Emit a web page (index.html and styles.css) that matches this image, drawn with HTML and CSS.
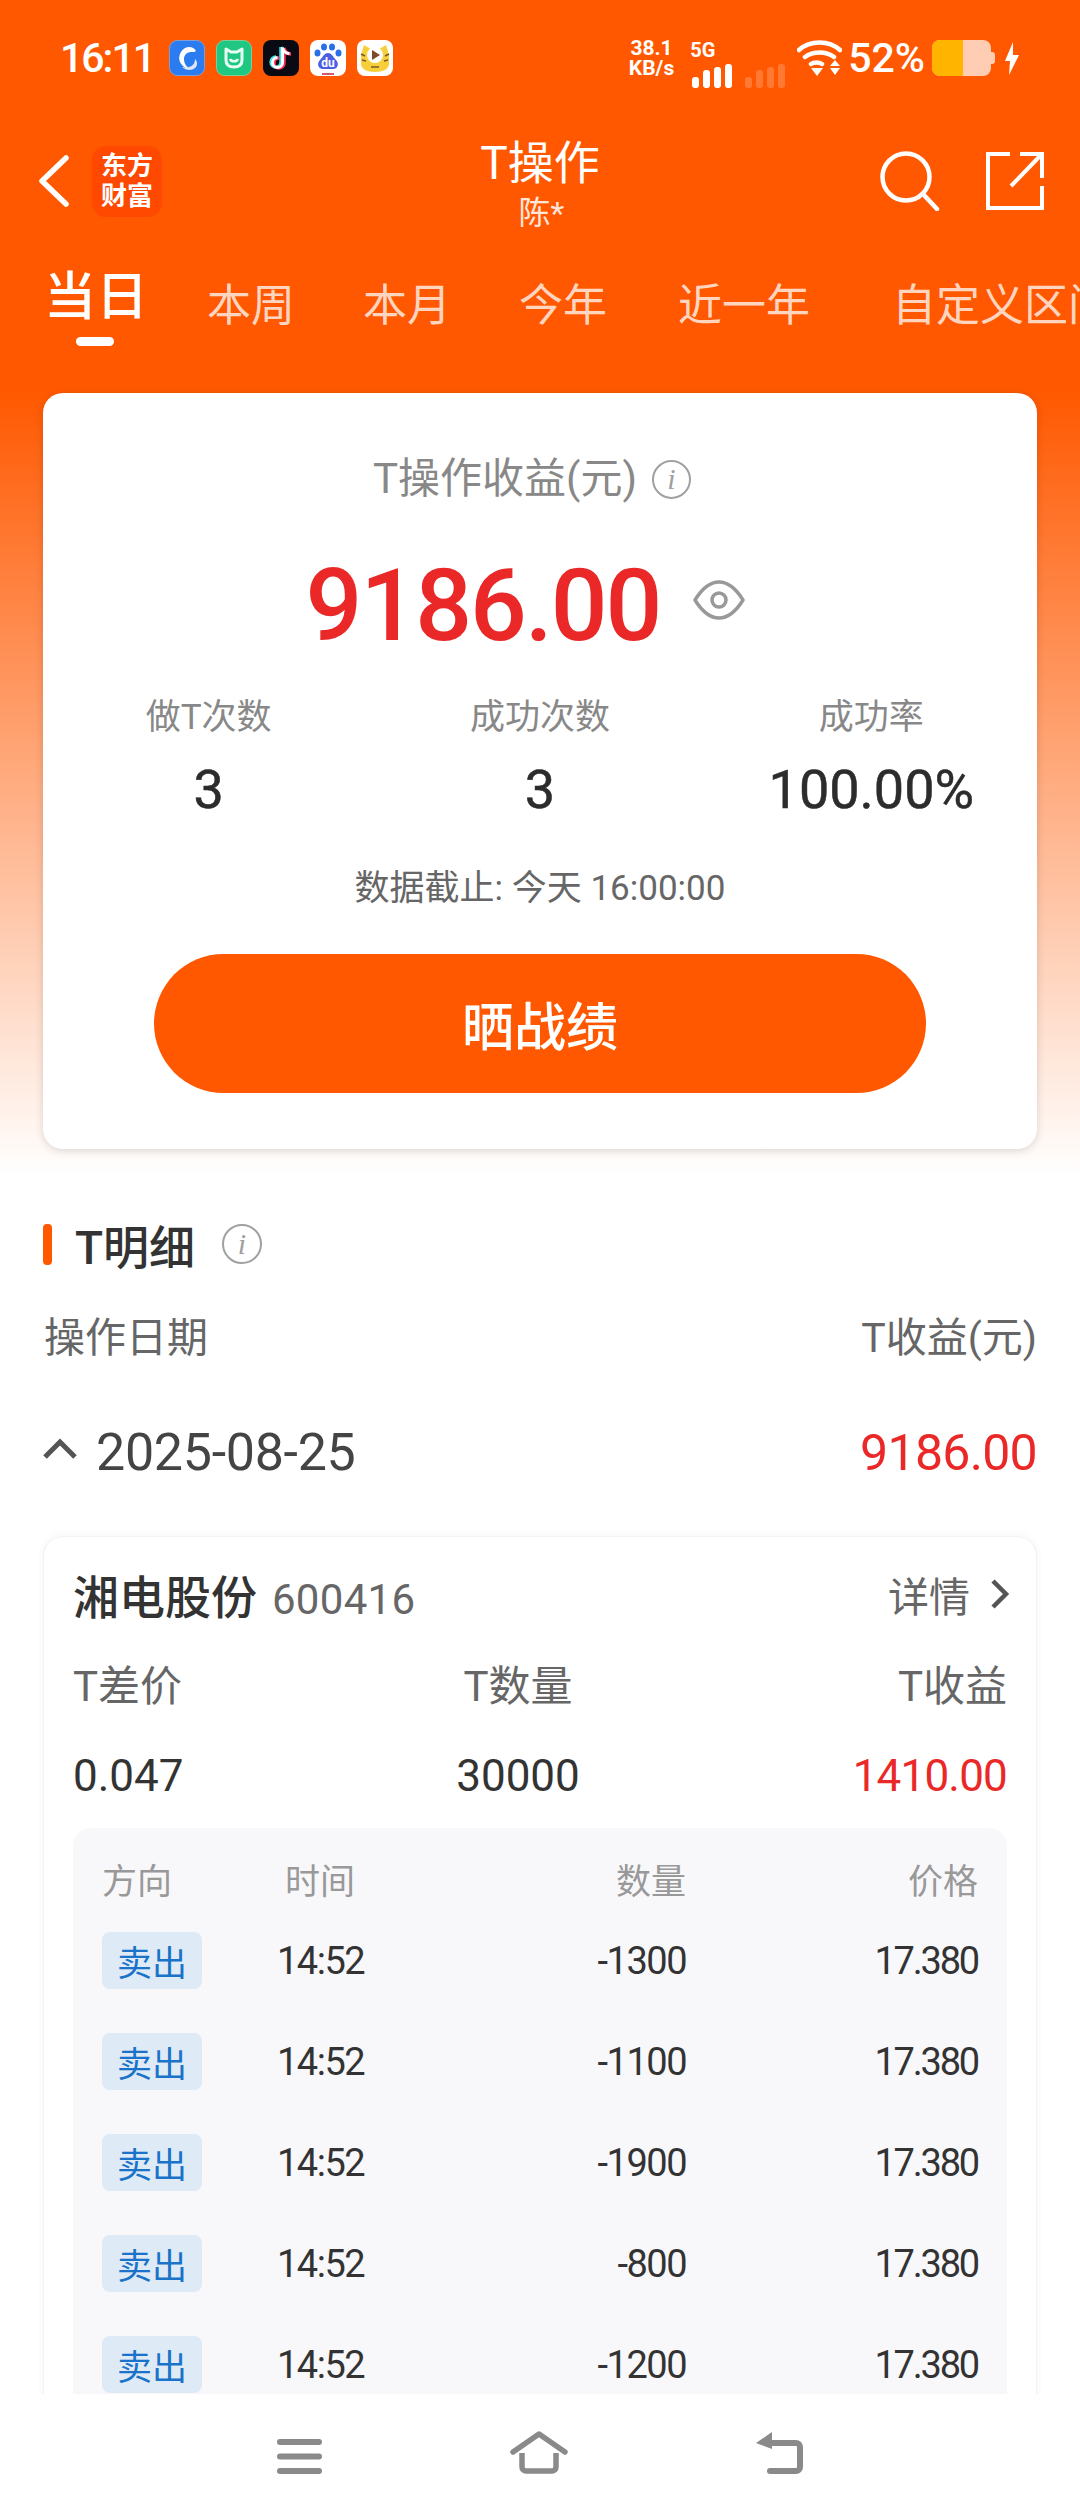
FILE: index.html
```html
<!DOCTYPE html>
<html lang="zh-CN">

<head>
  <meta charset="UTF-8" />
  <meta name="viewport" content="width=device-width, initial-scale=1.0" />
  <title>T操作</title>
  <link rel="stylesheet" href="styles.css">
</head>

<body>
  <div class="page">
    <div class="main">
      <!-- status bar -->
      <div class="status-bar">
        <div class="status-left">
          <span class="clock">16:11</span>
          <div class="app-icons">
            <svg class="app-icon" viewBox="0 0 36 36"><rect x=".5" y=".5" width="35" height="35" rx="8" fill="#2a7cf0" stroke="#7f9fd8"/><path d="M27 11c-2-4-7-5-11-3-5 3-7 9-5 14 2 4 6 7 10 7-3-2-6-5-6-10 0-4 3-7 7-7 2 0 4 0 5-1z" fill="#fff"/><path d="M13 27c4 4 11 4 14 0 2-3 1-6-1-8 0 4-2 7-6 8-2 .5-5 .5-7 0z" fill="#dfe6f2"/></svg>
            <svg class="app-icon" viewBox="0 0 36 36"><rect x=".5" y=".5" width="35" height="35" rx="8" fill="#1fc782" stroke="#7fcf9a"/><path d="M10 9l5 3h6l5-3v11c0 5-3 7-8 7s-8-2-8-7z" fill="none" stroke="#e8fff4" stroke-width="3" stroke-linejoin="round"/><path d="M14 19c1 3 7 3 8 0" fill="none" stroke="#e8fff4" stroke-width="2.5"/></svg>
            <svg class="app-icon" viewBox="0 0 36 36"><rect width="36" height="36" rx="8" fill="#0a0a14"/><path d="M18 7v15a5 5 0 1 1-5-5M18 7c1 4 3 6 7 6" fill="none" stroke="#3fe0e0" stroke-width="3.5"/><path d="M21 8v15a5 5 0 1 1-5-5M21 8c1 4 3 6 7 6" fill="none" stroke="#ff2d55" stroke-width="3.5"/><path d="M19.500 7.500v15a5 5 0 1 1-5-5M19.500 7.500c1 4 3 6 7 6" fill="none" stroke="#fff" stroke-width="3"/></svg>
            <svg class="app-icon" viewBox="0 0 36 36"><rect width="36" height="36" rx="8" fill="#fff"/><ellipse cx="7.500" cy="13" rx="3" ry="3.500" fill="#2a6fe8"/><ellipse cx="14" cy="7" rx="3" ry="3.500" fill="#2a6fe8"/><ellipse cx="22" cy="7" rx="3" ry="3.500" fill="#2a6fe8"/><ellipse cx="28.500" cy="13" rx="3" ry="3.500" fill="#2a6fe8"/><path d="M18 13c-4 0-5 4-8 7-4 4-1 10 4 9h8c5 1 8-5 4-9-3-3-4-7-8-7z" fill="#4b5fe0"/><text class="baidu-text" x="18" y="27" text-anchor="middle">du</text><rect x="12" y="33" width="12" height="2" fill="#d05a6a"/></svg>
            <svg class="app-icon" viewBox="0 0 36 36"><rect width="36" height="36" rx="8" fill="#fff"/><path d="M4 15l3-10 7 4h8l7-4 3 10v9c0 5-6 8-14 8S4 29 4 24z" fill="#f7cf3a"/><path d="M4 14l4 2M5 20l4 1M32 14l-4 2M31 20l-4 1" stroke="#7a5a2a" stroke-width="1.500"/><circle cx="18" cy="15" r="8" fill="#fff"/><path d="M15 10l8 5-8 5z" fill="#7a4a2a"/><path d="M14 27h8" stroke="#7a5a2a" stroke-width="1.500"/></svg>
          </div>
        </div>
        <div class="status-right">
          <div class="net-speed"><span>38.1</span><span>KB/s</span></div>
          <div class="signal">
            <span class="signal-label">5G</span>
            <svg width="40" height="24" viewBox="0 0 40 24"><rect x="0" y="13" width="7" height="11" rx="3" fill="#fff"/><rect x="11" y="6" width="7" height="18" rx="3" fill="#fff"/><rect x="22" y="3" width="7" height="21" rx="3" fill="#fff"/><rect x="33" y="0" width="7" height="24" rx="3" fill="#fff"/></svg>
          </div>
          <svg class="signal-off" width="40" height="24" viewBox="0 0 40 24"><rect x="0" y="13" width="7" height="11" rx="3" fill="#fff" opacity=".2"/><rect x="11" y="6" width="7" height="18" rx="3" fill="#fff" opacity=".2"/><rect x="22" y="3" width="7" height="21" rx="3" fill="#fff" opacity=".2"/><rect x="33" y="0" width="7" height="24" rx="3" fill="#fff" opacity=".2"/></svg>
          <svg width="45" height="37" viewBox="0 0 45 37"><path d="M2 10c11-10 30-10 41 0M8 17c8-6 21-6 29 0M14 24c3-2 8-2 11 0" fill="none" stroke="#fff" stroke-width="4.500" stroke-linecap="round"/><path d="M14 28h12l-6 8z" fill="#fff"/><path d="M33 26h10l-5-6zM33 28h10l-5 7z" fill="#fff"/></svg>
          <span class="battery-text">52%</span>
          <div class="battery"><div class="battery-fill" style="width: 52%"></div></div>
          <svg width="14" height="33" viewBox="0 0 14 33"><path d="M8 0L0 19h5l-1 14 10-20H8z" fill="#fff"/></svg>
        </div>
      </div>

      <!-- top nav -->
      <div class="nav">
        <div class="nav-left">
          <svg width="30" height="52" viewBox="0 0 30 52"><path d="M27 3L3 26l24 23" fill="none" stroke="#fff" stroke-width="5.500" stroke-linecap="round" stroke-linejoin="round"/></svg>
          <div class="brand-logo"><span>东方</span><span>财富</span></div>
        </div>
        <div class="nav-title">
          <div class="title-main">T操作</div>
          <div class="title-sub">陈*</div>
        </div>
        <div class="nav-right">
          <svg width="60" height="60" viewBox="0 0 60 60"><circle cx="26" cy="26" r="23.500" fill="none" stroke="#fff" stroke-width="4.500"/><path d="M43 43l14 15" stroke="#fff" stroke-width="4.500" stroke-linecap="round"/></svg>
          <svg width="58" height="58" viewBox="0 0 58 58"><path d="M24 2H2v54h54V34" fill="none" stroke="#fff" stroke-width="4"/><path d="M25 34L54 4M34 2h22v24" fill="none" stroke="#fff" stroke-width="4"/></svg>
        </div>
      </div>

      <!-- tabs -->
      <div class="tabs">
        <div class="tab tab-active">当日</div>
        <div class="tab">本周</div>
        <div class="tab">本月</div>
        <div class="tab">今年</div>
        <div class="tab tab-year">近一年</div>
        <div class="tab tab-custom">自定义区间</div>
      </div>

      <!-- summary card -->
      <div class="summary-card">
        <div class="summary-label">
          <span>T操作收益(元)</span>
          <span class="info-icon">i</span>
        </div>
        <div class="summary-amount">
          <span class="amount-text">9186.00</span>
          <svg class="eye-icon" width="52" height="40" viewBox="0 0 52 40"><path d="M2 20C10 7 18 2 26 2s16 5 24 18c-8 13-16 18-24 18S10 33 2 20z" fill="none" stroke="#999" stroke-width="3.500" stroke-linejoin="round"/><circle cx="26" cy="20" r="7" fill="none" stroke="#999" stroke-width="3.500"/></svg>
        </div>
        <div class="stats">
          <div class="stat-label">做T次数</div>
          <div class="stat-label">成功次数</div>
          <div class="stat-label">成功率</div>
          <div class="stat-value">3</div>
          <div class="stat-value">3</div>
          <div class="stat-value">100.00%</div>
        </div>
        <div class="summary-date">数据截止: 今天 16:00:00</div>
        <div class="share-btn">晒战绩</div>
      </div>

      <!-- detail -->
      <div class="detail">
        <div class="detail-title">
          <span class="title-bar"></span>
          <span class="detail-title-text">T明细</span>
          <span class="info-icon info-icon-lg">i</span>
        </div>
        <div class="detail-head">
          <span>操作日期</span>
          <span>T收益(元)</span>
        </div>
        <div class="date-row">
          <div class="date-left">
            <svg width="34" height="22" viewBox="0 0 34 22"><path d="M2 19L17 4l15 15" fill="none" stroke="#555" stroke-width="5"/></svg>
            <span>2025-08-25</span>
          </div>
          <span class="red date-amount">9186.00</span>
        </div>

        <div class="stock-card">
          <div class="stock-head">
            <div>
              <span class="stock-name">湘电股份</span>
              <span class="stock-code">600416</span>
            </div>
            <div class="stock-more">
              <span>详情</span>
              <svg width="20" height="32" viewBox="0 0 20 32"><path d="M3 3l13 13L3 29" fill="none" stroke="#555" stroke-width="4.500"/></svg>
            </div>
          </div>
          <div class="stock-cols stock-labels">
            <span>T差价</span>
            <span>T数量</span>
            <span>T收益</span>
          </div>
          <div class="stock-cols stock-values">
            <span>0.047</span>
            <span>30000</span>
            <span class="red stock-profit">1410.00</span>
          </div>

          <div class="trades">
            <div class="trades-row trades-head">
              <span>方向</span>
              <span class="col-time">时间</span>
              <span class="col-num">数量</span>
              <span class="col-num">价格</span>
            </div>
            <div class="trades-row">
              <span class="tag">卖出</span>
              <span class="col-time">14:52</span>
              <span class="col-num">-1300</span>
              <span class="col-num col-price">17.380</span>
            </div>
            <div class="trades-row">
              <span class="tag">卖出</span>
              <span class="col-time">14:52</span>
              <span class="col-num">-1100</span>
              <span class="col-num col-price">17.380</span>
            </div>
            <div class="trades-row">
              <span class="tag">卖出</span>
              <span class="col-time">14:52</span>
              <span class="col-num">-1900</span>
              <span class="col-num col-price">17.380</span>
            </div>
            <div class="trades-row">
              <span class="tag">卖出</span>
              <span class="col-time">14:52</span>
              <span class="col-num">-800</span>
              <span class="col-num col-price">17.380</span>
            </div>
            <div class="trades-row">
              <span class="tag">卖出</span>
              <span class="col-time">14:52</span>
              <span class="col-num">-1200</span>
              <span class="col-num col-price">17.380</span>
            </div>
          </div>
        </div>
      </div>
    </div>

    <!-- system nav -->
    <div class="sys-nav">
      <svg width="45" height="35" viewBox="0 0 45 35"><path d="M3 3h39M3 17.500h39M3 32h39" stroke="#8a8a8a" stroke-width="6" stroke-linecap="round"/></svg>
      <svg width="58" height="43" viewBox="0 0 58 43"><path d="M3 21L29 3l26 18" fill="none" stroke="#8a8a8a" stroke-width="5.500" stroke-linecap="round" stroke-linejoin="round"/><path d="M12 22v14a4 4 0 0 0 4 4h26a4 4 0 0 0 4-4V22" fill="none" stroke="#8a8a8a" stroke-width="5.500"/></svg>
      <svg width="48" height="42" viewBox="0 0 48 42"><path d="M14 11h27a4 4 0 0 1 4 4v20a4 4 0 0 1-4 4H15" fill="none" stroke="#8a8a8a" stroke-width="6" stroke-linecap="round"/><path d="M17 0v17L1 11z" fill="#8a8a8a"/></svg>
    </div>
  </div>
</body>

</html>
```

FILE: styles.css
```css
* {
  box-sizing: border-box;
}

body {
  margin: 0;
  font-family: Roboto, "Noto Sans CJK SC", sans-serif;
  color: #333;
}

.page {
  width: 1080px;
  height: 2520px;
  display: flex;
  flex-direction: column;
  overflow: hidden;
  background: #fff;
}

.main {
  flex: 1;
  min-height: 0;
  overflow: hidden;
  background: linear-gradient(#ff5800 390px, #fff 1175px);
}

.red {
  color: #ea2828;
}

/* status bar */
.status-bar {
  height: 116px;
  padding: 0 61px 0 60px;
  display: flex;
  justify-content: space-between;
  align-items: center;
  color: #fff;
}

.status-left {
  display: flex;
  align-items: center;
  gap: 15px;
}

.clock {
  font-size: 41px;
  font-weight: 500;
  letter-spacing: -2px;
}

.app-icons {
  display: flex;
  gap: 11px;
}

.app-icon {
  width: 36px;
  height: 36px;
}

.baidu-text {
  font-size: 12px;
  font-weight: 700;
  fill: #fff;
}

.status-right {
  display: flex;
  align-items: center;
  gap: 10px;
}

.net-speed {
  display: flex;
  flex-direction: column;
  align-items: center;
  font-size: 21px;
  font-weight: 700;
  line-height: 20px;
  margin-right: 8px;
}

.signal {
  position: relative;
  height: 24px;
  margin-top: 36px;
}

.signal svg {
  display: block;
}

.signal-label {
  position: absolute;
  left: -2px;
  top: -24px;
  font-size: 20px;
  font-weight: 700;
  line-height: 20px;
}

.signal-off {
  margin: 36px 2px 0 3px;
}

.battery-text {
  margin: 0 -3px 0 -4px;
  font-size: 41px;
  font-weight: 500;
}

.battery {
  position: relative;
  width: 59px;
  height: 36px;
  margin-right: 4px;
  border-radius: 8px;
  background: #ffcdb4;
}

.battery::after {
  content: "";
  position: absolute;
  right: -4px;
  top: 12px;
  width: 4px;
  height: 12px;
  border-radius: 0 3px 3px 0;
  background: #ffcdb4;
}

.battery-fill {
  height: 100%;
  border-radius: 8px 0 0 8px;
  background: #ffb400;
}

/* top nav */
.nav {
  height: 130px;
  padding: 0 36px 0 39px;
  display: grid;
  grid-template-columns: 1fr auto 1fr;
  align-items: center;
  color: #fff;
}

.nav-left {
  display: flex;
  align-items: center;
  gap: 23px;
}

.brand-logo {
  width: 70px;
  height: 71px;
  border-radius: 14px;
  background: #ff4800;
  display: flex;
  flex-direction: column;
  align-items: center;
  justify-content: center;
  font-size: 26px;
  font-weight: 700;
  line-height: 30px;
}

.nav-title {
  padding-top: 6px;
  text-align: center;
}

.title-main {
  padding-right: 3px;
  font-size: 46px;
  line-height: 54px;
}

.title-sub {
  margin-top: 4px;
  font-size: 32px;
  line-height: 38px;
  opacity: 0.85;
}

.nav-right {
  display: flex;
  justify-content: flex-end;
  align-items: center;
  gap: 46px;
}

/* tabs */
.tabs {
  height: 147px;
  padding: 24px 0 0 44px;
  display: flex;
  gap: 68px;
  align-items: flex-start;
  white-space: nowrap;
  overflow: hidden;
}

.tab {
  flex: none;
  font-size: 44px;
  line-height: 56px;
  margin-top: 8px;
  color: #ffd5c0;
}

.tab-active {
  position: relative;
  font-size: 52px;
  font-weight: 500;
  margin-top: 0;
  margin-right: -9px;
  color: #fff;
}

.tab-active::after {
  content: "";
  position: absolute;
  left: 32px;
  top: 67px;
  width: 38px;
  height: 9px;
  border-radius: 5px;
  background: #fff;
}

.tab-year {
  margin-left: 3px;
}

.tab-custom {
  margin-left: 14px;
}

/* summary card */
.summary-card {
  margin: 0 43px;
  height: 756px;
  padding-top: 64px;
  border-radius: 20px;
  background: #fff;
  box-shadow: 0 2px 8px rgba(0, 0, 0, 0.14);
  text-align: center;
}

.summary-label {
  padding-right: 16px;
  display: flex;
  justify-content: center;
  align-items: center;
  gap: 15px;
  font-size: 42px;
  line-height: 44px;
  color: #888;
}

.info-icon {
  width: 39px;
  height: 39px;
  border: 2.5px solid #a0a0a0;
  border-radius: 50%;
  display: inline-flex;
  align-items: center;
  justify-content: center;
  font-family: "Liberation Serif", serif;
  font-style: italic;
  font-size: 30px;
  line-height: 1;
  color: #a0a0a0;
}

.summary-amount {
  margin-top: 43px;
  padding-right: 29px;
  display: flex;
  justify-content: center;
  align-items: center;
  gap: 33px;
  height: 120px;
}

.amount-text {
  margin-top: 2px;
  font-size: 100px;
  font-weight: 500;
  letter-spacing: -2px;
  color: #ea2828;
}

.eye-icon {
  margin-bottom: 8px;
}

.stats {
  margin-top: 32px;
  display: grid;
  grid-template-columns: repeat(3, 1fr);
  row-gap: 19px;
}

.stat-label {
  font-size: 35px;
  line-height: 44px;
  color: #888;
}

.stat-value {
  font-size: 54px;
  line-height: 62px;
  -webkit-text-stroke: 0.5px #2c2c2c;
  color: #2c2c2c;
}

.summary-date {
  margin-top: 46px;
  font-size: 35px;
  line-height: 44px;
  color: #666;
}

.share-btn {
  margin: 43px auto 0;
  width: 772px;
  height: 139px;
  border-radius: 70px;
  background: #ff5800;
  display: flex;
  align-items: center;
  justify-content: center;
  font-size: 52px;
  font-weight: 500;
  color: #fff;
}

/* detail */
.detail {
  padding: 70px 43px 0;
}

.detail-title {
  height: 50px;
  display: flex;
  align-items: center;
}

.title-bar {
  width: 9px;
  height: 41px;
  border-radius: 4px;
  background: #ff5800;
  margin-right: 23px;
}

.detail-title-text {
  font-size: 46px;
  font-weight: 500;
  margin-right: 27px;
  color: #333;
}

.info-icon-lg {
  width: 40px;
  height: 40px;
}

.detail-head {
  margin-top: 44px;
  padding-left: 1px;
  display: flex;
  justify-content: space-between;
  font-size: 41px;
  line-height: 50px;
  color: #666;
}

.date-row {
  margin-top: 60px;
  display: flex;
  justify-content: space-between;
  font-size: 52px;
  line-height: 60px;
}

.date-amount {
  font-size: 50px;
  letter-spacing: -0.7px;
}

.date-left {
  display: flex;
  align-items: center;
  gap: 19px;
  letter-spacing: -0.3px;
  color: #444;
}

.date-left svg {
  margin-bottom: 8px;
}

.stock-card {
  margin-top: 53px;
  padding: 34px 29px 0;
  border: 1px solid #f3f3f3;
  border-radius: 20px;
  background: #fff;
  box-shadow: 0 0 8px rgba(0, 0, 0, 0.05);
}

.stock-head {
  display: flex;
  justify-content: space-between;
  align-items: center;
  height: 46px;
}

.stock-name {
  font-size: 46px;
  font-weight: 500;
  color: #333;
}

.stock-code {
  margin-left: 11px;
  font-size: 42px;
  letter-spacing: 0.3px;
  color: #666;
}

.stock-more {
  margin-right: -3px;
  display: flex;
  align-items: center;
  gap: 20px;
  font-size: 41px;
  color: #666;
}

.stock-cols {
  display: grid;
  grid-template-columns: 300px 290px 1fr;
  line-height: 50px;
  margin-top: 39px;
}

.stock-cols span:nth-child(2) {
  text-align: center;
}

.stock-cols span:nth-child(3) {
  text-align: right;
}

.stock-labels {
  margin-top: 45px;
  font-size: 42px;
  color: #666;
}

.stock-values {
  font-size: 44px;
  color: #333;
}

.stock-profit {
  letter-spacing: -0.8px;
}

.trades {
  margin-top: 27px;
  padding: 25px 29px 40px;
  border-radius: 18px;
  background: #f8f8fb;
}

.trades-row {
  display: grid;
  grid-template-columns: 175px 86px 323px 1fr;
  align-items: center;
  height: 57px;
  margin-top: 44px;
  font-size: 38px;
  letter-spacing: -1.5px;
  color: #333;
}

.trades-head {
  height: 40px;
  margin-top: 0;
  margin-bottom: -5px;
  font-size: 35px;
  letter-spacing: 0;
  color: #999;
}

.col-time {
  text-align: center;
}

.col-num {
  text-align: right;
}

.col-price {
  letter-spacing: -2.2px;
}

.tag {
  width: 100px;
  height: 57px;
  border-radius: 8px;
  background: #dfeaf7;
  display: flex;
  align-items: center;
  justify-content: center;
  font-size: 35px;
  letter-spacing: 0;
  color: #1a73c8;
}

/* system nav */
.sys-nav {
  flex: none;
  height: 126px;
  padding: 0 277px 46px 277px;
  display: flex;
  justify-content: space-between;
  align-items: flex-end;
  background: #fff;
}
```
